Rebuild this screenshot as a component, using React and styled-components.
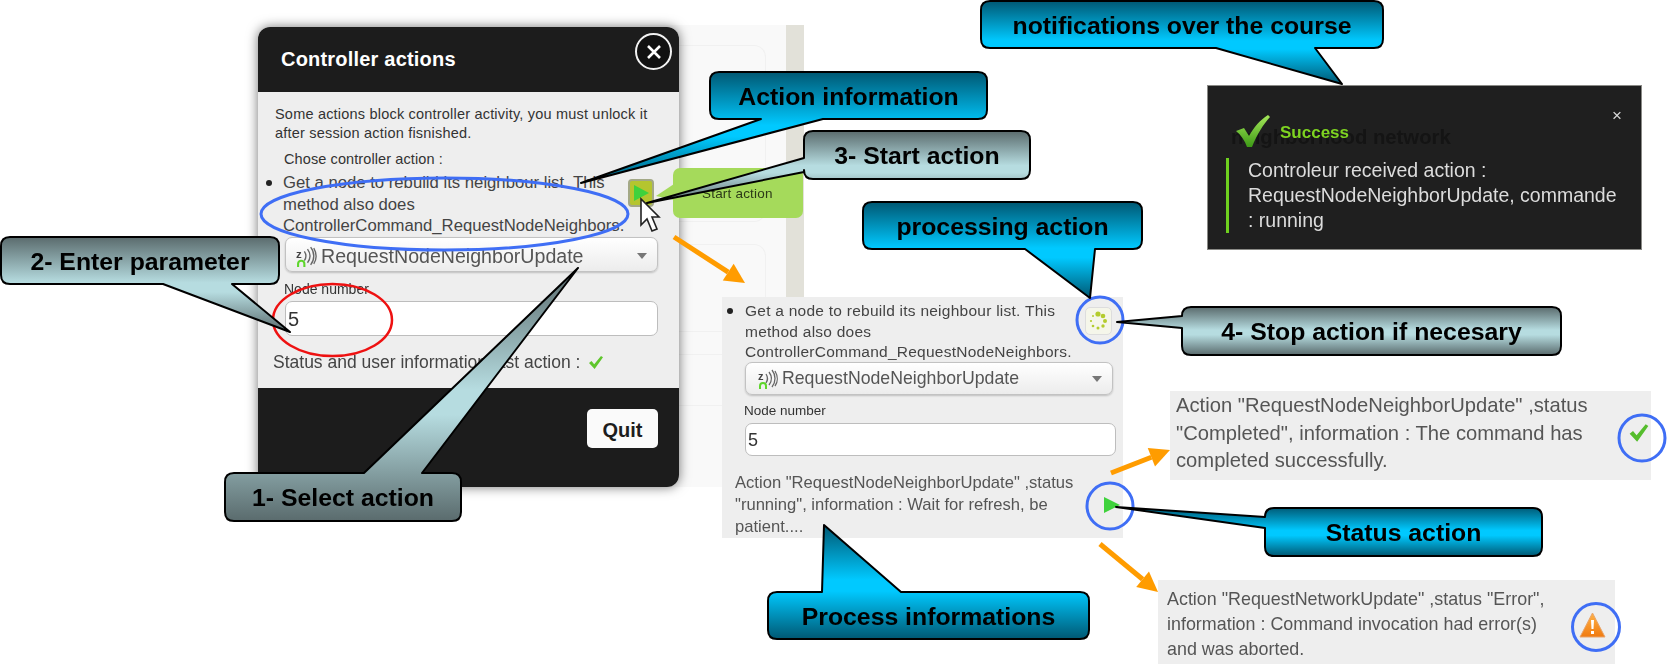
import styled, { createGlobalStyle } from "styled-components";

const GlobalStyle = createGlobalStyle`
  html, body {
    margin: 0;
    padding: 0;
    background: #fff;
  }
  body {
    font-family: "Liberation Sans", Arial, sans-serif;
  }
`;

const Canvas = styled.div`
  position: relative;
  width: 1668px;
  height: 664px;
  overflow: hidden;
  background: #fff;
`;

const Backdrop = styled.div`
  position: absolute;
  left: 640px;
  top: 25px;
  width: 164px;
  height: 462px;
  display: flex;
  background: #f9f9f9;
`;

const BackdropMain = styled.div`
  flex: 1;
  display: flex;
  flex-direction: column;
  gap: 22px;
  padding: 20px 20px 0 0;
`;

const BackdropCard = styled.div`
  height: ${(p) => p.$h}px;
  border: 1px solid #f1f1f1;
  border-left: none;
  border-radius: 0 12px 12px 0;
`;

const BackdropSide = styled.div`
  width: 18px;
  background: #e2e1d9;
`;

const Dialog = styled.div`
  position: absolute;
  left: 258px;
  top: 27px;
  width: 421px;
  height: 460px;
  display: flex;
  flex-direction: column;
  border-radius: 12px;
  overflow: hidden;
  box-shadow: 0 0 12px rgba(0, 0, 0, 0.55);
  filter: blur(0.4px);
`;

const DialogHeader = styled.div`
  height: 65px;
  flex: none;
  box-sizing: border-box;
  display: flex;
  align-items: center;
  justify-content: space-between;
  padding: 0 7px 0 23px;
  background: #1c1c1c;
  color: #fff;
`;

const DialogTitle = styled.h2`
  margin: 0;
  font-size: 20px;
  font-weight: 700;
  letter-spacing: 0.2px;
`;

const CloseButton = styled.div`
  width: 37px;
  height: 37px;
  box-sizing: border-box;
  border-radius: 50%;
  margin-top: -16px;
  border: 2.5px solid #f2f2f2;
  background: #111;
  color: #fff;
  display: flex;
  align-items: center;
  justify-content: center;
`;

const DialogBody = styled.div`
  flex: 1;
  display: flex;
  flex-direction: column;
  background: #eee;
  padding: 13px 21px 0 15px;
  color: #333;
`;

const Intro = styled.p`
  margin: 0 0 0 2px;
  font-size: 14.5px;
  line-height: 19px;
  letter-spacing: 0.2px;
  white-space: nowrap;
`;

const ChooseLabel = styled.div`
  margin: 7px 0 3px 11px;
  font-size: 14.5px;
  line-height: 19px;
  letter-spacing: 0.1px;
`;

const ActionRow = styled.div`
  display: flex;
  align-items: flex-start;
  height: 65px;
  margin-left: -7px;
`;

const Bullet = styled.span`
  flex: none;
  width: 6px;
  height: 6px;
  border-radius: 50%;
  background: #222;
  margin: ${(p) => p.$top}px ${(p) => p.$gap}px 0 0;
`;

const ActionText = styled.div`
  width: ${(p) => p.$w}px;
  font-size: ${(p) => p.$size}px;
  line-height: ${(p) => p.$line}px;
  letter-spacing: ${(p) => p.$spacing || 0}px;
  color: #444;
  white-space: nowrap;
`;

const PlayButton = styled.div`
  flex: none;
  width: 26px;
  height: 28px;
  margin: 7px 0 0 6px;
  box-sizing: border-box;
  border: 2px solid #a3a886;
  border-radius: 4px;
  background: #b5c52f;
  display: flex;
  align-items: center;
  justify-content: center;
`;

const PlayTriangle = styled.span`
  width: 0;
  height: 0;
  border-left: ${(p) => p.$size}px solid #3fd23c;
  border-top: ${(p) => p.$size * 0.55}px solid transparent;
  border-bottom: ${(p) => p.$size * 0.55}px solid transparent;
`;

const SelectBox = styled.div`
  width: ${(p) => p.$w}px;
  height: ${(p) => p.$h}px;
  box-sizing: border-box;
  margin-left: ${(p) => p.$left}px;
  display: flex;
  align-items: center;
  gap: 2px;
  padding: ${(p) => p.$nudge || 0}px 10px 0 ${(p) => p.$pad}px;
  border: 1.5px solid #c2c2c2;
  border-radius: 7px;
  background: linear-gradient(#ffffff, #ececec);
  box-shadow: 0 1px 2px rgba(0, 0, 0, 0.2);
  font-size: ${(p) => p.$size}px;
  color: #555;
`;

const SelectCaret = styled.span`
  margin-left: auto;
  width: 0;
  height: 0;
  border-left: 5px solid transparent;
  border-right: 5px solid transparent;
  border-top: 6px solid #777;
`;

const FieldLabel = styled.div`
  margin: ${(p) => p.$top}px 0 4px ${(p) => p.$left}px;
  font-size: ${(p) => p.$size}px;
  line-height: 16px;
  color: #333;
`;

const TextField = styled.div`
  width: ${(p) => p.$w}px;
  height: ${(p) => p.$h}px;
  box-sizing: border-box;
  margin-left: ${(p) => p.$left}px;
  padding: 2px 0 0 2px;
  display: flex;
  align-items: center;
  border: 1.5px solid #bdbdbd;
  border-radius: 7px;
  background: #fff;
  font-size: ${(p) => p.$size}px;
  color: #333;
`;

const StatusLine = styled.div`
  margin: 16px 0 0 0;
  display: flex;
  align-items: center;
  gap: 8px;
  font-size: 17.5px;
  line-height: 20px;
  color: #444;
  white-space: nowrap;
`;

const DialogFooter = styled.div`
  height: 99px;
  flex: none;
  box-sizing: border-box;
  display: flex;
  justify-content: flex-end;
  padding: 21px 21px 0 0;
  background: #1c1c1c;
`;

const QuitButton = styled.div`
  width: 71px;
  height: 39px;
  box-sizing: border-box;
  padding-top: 3px;
  display: flex;
  align-items: center;
  justify-content: center;
  border-radius: 5px;
  background: #fafafa;
  font-size: 20px;
  font-weight: 700;
  color: #1d1d1d;
`;

const StartTooltip = styled.div`
  position: absolute;
  left: 673px;
  top: 168px;
  width: 130px;
  height: 50px;
  box-sizing: border-box;
  padding-left: 29px;
  display: flex;
  align-items: center;
  border-radius: 7px;
  background: #a5da5b;
  font-size: 13.5px;
  letter-spacing: 0.2px;
  color: #2c3a17;
  filter: blur(0.3px);

  &::before {
    content: "";
    position: absolute;
    left: -17px;
    top: 16px;
    border-right: 18px solid #a5da5b;
    border-top: 12px solid transparent;
    border-bottom: 4px solid transparent;
  }
`;

const Panel = styled.div`
  position: absolute;
  left: ${(p) => p.$x}px;
  top: ${(p) => p.$y}px;
  width: ${(p) => p.$w}px;
  height: ${(p) => p.$h}px;
  box-sizing: border-box;
  padding: ${(p) => p.$pad};
  background: #eee;
  filter: blur(0.35px);
`;

const RunningRow = styled.div`
  display: flex;
  align-items: flex-start;
  height: 61px;
`;

const SpinnerButton = styled.div`
  flex: none;
  width: 25px;
  height: 26px;
  margin: 6px 0 0 0;
  border-radius: 5px;
  border: 1px solid #ddd;
  background: #f5f6ea;
`;

const PanelText = styled.div`
  font-size: ${(p) => p.$size}px;
  line-height: ${(p) => p.$line}px;
  letter-spacing: ${(p) => p.$spacing || 0}px;
  color: #555;
  white-space: nowrap;
  margin-top: ${(p) => p.$top || 0}px;
  margin-left: ${(p) => p.$left || 0}px;
`;

const Toast = styled.div`
  position: absolute;
  left: 1207px;
  top: 85px;
  width: 435px;
  height: 165px;
  box-sizing: border-box;
  border: 1px solid #8a8a86;
  background: #1f1f1f;
  padding: 30px 18px 0 18px;
  filter: blur(0.35px);
`;

const GhostHeading = styled.div`
  position: absolute;
  left: 23px;
  top: 40px;
  font-size: 20.3px;
  font-weight: 700;
  color: #141414;
  white-space: nowrap;
`;

const ToastClose = styled.div`
  position: absolute;
  right: 19px;
  top: 21px;
  font-size: 17px;
  line-height: 18px;
  color: #d8d8d8;
`;

const ToastHead = styled.div`
  position: relative;
  display: flex;
  align-items: center;
  gap: 10px;
  height: 30px;
  margin-left: 10px;
`;

const ToastTitle = styled.div`
  margin-top: 4px;
  font-size: 17px;
  font-weight: 700;
  color: #7ed321;
`;

const ToastMessage = styled.div`
  position: relative;
  margin-top: 12px;
  padding-left: 19px;
  border-left: 3px solid #6fd01f;
  font-size: 19.5px;
  line-height: 25px;
  color: #dcdcdc;
  white-space: nowrap;
`;

const Annotations = styled.svg`
  position: absolute;
  left: 0;
  top: 0;
  width: 1668px;
  height: 664px;
  pointer-events: none;
`;

const IconSpot = styled.svg`
  position: absolute;
  left: ${(p) => p.$x}px;
  top: ${(p) => p.$y}px;
  width: ${(p) => p.$w}px;
  height: ${(p) => p.$h}px;
  overflow: visible;
`;

const CalloutBox = styled.div`
  position: absolute;
  left: ${(p) => p.$x}px;
  top: ${(p) => p.$y}px;
  width: ${(p) => p.$w}px;
  height: ${(p) => p.$h}px;
  display: flex;
  align-items: center;
  justify-content: center;
  font-size: 24.8px;
  font-weight: 700;
  color: #000;
  white-space: nowrap;
`;

const CalloutShape = styled.svg`
  position: absolute;
  left: 0;
  top: 0;
  width: 100%;
  height: 100%;
  overflow: visible;
`;

const CalloutLabel = styled.span`
  position: relative;
  top: 1px;
`;

const tones = {
  blue: ["#005873", "#00c9ff"],
  gray: ["#5a6b6d", "#b6dce0"],
};

function tailPath(w, h, side, a, b, tip) {
  const r = 9;
  const t = `${tip[0]} ${tip[1]}`;
  let d = `M ${r} 0 `;
  if (side === "top") d += `L ${a} 0 L ${t} L ${b} 0 `;
  d += `L ${w - r} 0 Q ${w} 0 ${w} ${r} L ${w} ${h - r} Q ${w} ${h} ${w - r} ${h} `;
  if (side === "bottom") d += `L ${b} ${h} L ${t} L ${a} ${h} `;
  d += `L ${r} ${h} Q 0 ${h} 0 ${h - r} `;
  if (side === "left") d += `L 0 ${b} L ${t} L 0 ${a} `;
  d += `L 0 ${r} Q 0 0 ${r} 0 Z`;
  return d;
}

// tip and base are given in page coordinates, the path wants them local to the box
const Callout = ({ x, y, w, h, side, base, tip, tone = "blue", children }) => {
  const offset = side === "left" ? y : x;
  const id = `callout-${x}-${y}`;
  const [dark, light] = tones[tone];
  return (
    <CalloutBox $x={x} $y={y} $w={w} $h={h}>
      <CalloutShape viewBox={`0 0 ${w} ${h}`}>
        <defs>
          <linearGradient id={id} x1="0" y1="0" x2="0" y2="1">
            <stop offset="0" stopColor={dark} />
            <stop offset="0.48" stopColor={light} />
            <stop offset="0.58" stopColor={light} />
            <stop offset="1" stopColor={dark} />
          </linearGradient>
        </defs>
        <path
          d={tailPath(w, h, side, base[0] - offset, base[1] - offset, [tip[0] - x, tip[1] - y])}
          fill={`url(#${id})`}
          stroke="#000"
          strokeWidth="2"
          strokeLinejoin="round"
        />
      </CalloutShape>
      <CalloutLabel>{children}</CalloutLabel>
    </CalloutBox>
  );
};

const OrangeArrow = ({ from, to }) => {
  const angle = Math.atan2(to[1] - from[1], to[0] - from[0]);
  const back = [to[0] - 20 * Math.cos(angle), to[1] - 20 * Math.sin(angle)];
  const nx = -Math.sin(angle) * 10;
  const ny = Math.cos(angle) * 10;
  return (
    <g>
      <line x1={from[0]} y1={from[1]} x2={back[0]} y2={back[1]} stroke="#ff9c00" strokeWidth="5" />
      <polygon
        points={`${to[0]},${to[1]} ${back[0] + nx},${back[1] + ny} ${back[0] - nx},${back[1] - ny}`}
        fill="#ff9c00"
      />
    </g>
  );
};

const ZWaveIcon = ({ size }) => (
  <svg width={size} height={size} viewBox="0 0 22 22" fill="none" style={{ flex: "none" }}>
    <text x="0" y="12" fontSize="11" fontWeight="700" fontFamily="Liberation Sans" fill="#444">z</text>
    <path d="M8 6c2 3 2 6 0 9M11 4c3 4 3 9 0 13M14 2c4 5 4 12 0 17M17 3c3 5 3 11 0 15" stroke="#666" strokeWidth="1.3" />
    <path d="M2 21v-3a3 3 0 0 1 6 0v3" stroke="#5ed62c" strokeWidth="2" />
  </svg>
);

const SmallCheck = () => (
  <svg width="16" height="15" viewBox="0 0 16 15" style={{ flex: "none" }}>
    <path d="M1 8l2.5-2 2.7 3.2L13 1l2 1.2L6.6 14z" fill="#5fc62c" />
  </svg>
);

const spinnerDots = [
  [12, 6, 2.6], [17, 8, 2.3], [19, 13, 2], [17, 18, 1.7], [12, 20, 1.5],
  [7, 18, 1.3], [5, 13, 1.1], [7, 8, 1],
];

const Spinner = () => (
  <svg width="25" height="26" viewBox="0 0 25 26">
    {spinnerDots.map(([cx, cy, r]) => (
      <circle key={`${cx}-${cy}`} cx={cx} cy={cy} r={r} fill="#b4cc2e" />
    ))}
  </svg>
);

const ActionForm = () => (
  <Panel $x={722} $y={297} $w={401} $h={241} $pad="4px 0 0 5px">
    <RunningRow>
      <Bullet $top={7} $gap={12} />
      <ActionText $w={340} $size={15.5} $line={20.5} $spacing={0.25}>
        Get a node to rebuild its neighbour list. This<br />
        method also does<br />
        ControllerCommand_RequestNodeNeighbors.
      </ActionText>
      <SpinnerButton><Spinner /></SpinnerButton>
    </RunningRow>
    <SelectBox $w={368} $h={33} $left={18} $pad={12} $size={17.7}>
      <ZWaveIcon size={22} />
      RequestNodeNeighborUpdate
      <SelectCaret />
    </SelectBox>
    <FieldLabel $top={8} $left={17} $size={13.5}>Node number</FieldLabel>
    <TextField $w={371} $h={33} $left={18} $size={18}>5</TextField>
    <PanelText $size={16.6} $line={22} $top={16} $left={8}>
      Action "RequestNodeNeighborUpdate" ,status<br />
      "running", information : Wait for refresh, be<br />
      patient....
    </PanelText>
  </Panel>
);

export default function App() {
  return (
    <>
      <GlobalStyle />
      <Canvas>
        <Backdrop>
          <BackdropMain>
            <BackdropCard $h={175} />
            <BackdropCard $h={86} />
            <BackdropCard $h={50} />
          </BackdropMain>
          <BackdropSide />
        </Backdrop>

        <Dialog>
          <DialogHeader>
            <DialogTitle>Controller actions</DialogTitle>
            <CloseButton>
              <svg width="18" height="18" viewBox="0 0 18 18">
                <path d="M3 3l12 12M15 3L3 15" stroke="#fff" strokeWidth="2.6" />
              </svg>
            </CloseButton>
          </DialogHeader>
          <DialogBody>
            <Intro>
              Some actions block controller activity, you must unlock it<br />
              after session action fisnished.
            </Intro>
            <ChooseLabel>Chose controller action :</ChooseLabel>
            <ActionRow>
              <Bullet $top={8} $gap={11} />
              <ActionText $w={339} $size={16.7} $line={21.5}>
                Get a node to rebuild its neighbour list. This<br />
                method also does<br />
                ControllerCommand_RequestNodeNeighbors.
              </ActionText>
              <PlayButton><PlayTriangle $size={15} /></PlayButton>
            </ActionRow>
            <SelectBox $w={373} $h={35} $left={12} $pad={10} $size={19.6} $nudge={3}>
              <ZWaveIcon size={23} />
              RequestNodeNeighborUpdate
              <SelectCaret />
            </SelectBox>
            <FieldLabel $top={9} $left={11} $size={14}>Node number</FieldLabel>
            <TextField $w={373} $h={35} $left={12} $size={20}>5</TextField>
            <StatusLine>
              Status and user information last action :
              <SmallCheck />
            </StatusLine>
          </DialogBody>
          <DialogFooter>
            <QuitButton>Quit</QuitButton>
          </DialogFooter>
        </Dialog>

        <StartTooltip>Start action</StartTooltip>

        <ActionForm />

        <Panel $x={1170} $y={391} $w={481} $h={89} $pad="1px 0 0 6px">
          <PanelText $size={20.2} $line={27.5}>
            Action "RequestNodeNeighborUpdate" ,status<br />
            "Completed", information : The command has<br />
            completed successfully.
          </PanelText>
        </Panel>

        <Panel $x={1158} $y={580} $w={457} $h={84} $pad="7px 0 0 9px">
          <PanelText $size={17.9} $line={25}>
            Action "RequestNetworkUpdate" ,status "Error",<br />
            information : Command invocation had error(s)<br />
            and was aborted.
          </PanelText>
        </Panel>

        <Toast>
          <GhostHeading>neighborhood network</GhostHeading>
          <ToastClose>×</ToastClose>
          <ToastHead>
            <svg width="34" height="32" viewBox="0 0 34 32">
              <defs>
                <linearGradient id="toast-check" x1="0" y1="0" x2="0" y2="1">
                  <stop offset="0" stopColor="#a6e85a" />
                  <stop offset="1" stopColor="#3d9a16" />
                </linearGradient>
              </defs>
              <path d="M0 16l8-3 5 8C18 12 24 5 32 0l2 2c-7 8-13 17-18 30h-5C9 26 5 20 0 16z" fill="url(#toast-check)" />
            </svg>
            <ToastTitle>Success</ToastTitle>
          </ToastHead>
          <ToastMessage>
            Controleur received action :<br />
            RequestNodeNeighborUpdate, commande<br />
            : running
          </ToastMessage>
        </Toast>

        <IconSpot $x={640} $y={198} $w={19} $h={35} viewBox="0 0 19 35">
          <path d="M1 1v26l6-6 5 12 5-2-5-12h7z" fill="#fff" stroke="#222" strokeWidth="1.6" />
        </IconSpot>
        <IconSpot $x={1104} $y={497} $w={16} $h={16} viewBox="0 0 16 16">
          <path d="M0 0l16 8-16 8z" fill="#3fd23c" />
        </IconSpot>
        <IconSpot $x={1628} $y={423} $w={22} $h={20} viewBox="0 0 16 15">
          <path d="M1 8l2.5-2 2.7 3.2L13 1l2 1.2L6.6 14z" fill="#55bd2c" />
        </IconSpot>
        <IconSpot $x={1579} $y={612} $w={27} $h={26} viewBox="0 0 27 26">
          <defs>
            <linearGradient id="warn-fill" x1="0" y1="0" x2="0" y2="1">
              <stop offset="0" stopColor="#ffb347" />
              <stop offset="1" stopColor="#f07a10" />
            </linearGradient>
          </defs>
          <path d="M13.5 1L26 25H1z" fill="url(#warn-fill)" stroke="#e8a46a" strokeLinejoin="round" />
          <path d="M12 8h3l-.5 9h-2zM12 19h3v3h-3z" fill="#fff" />
        </IconSpot>

        <Annotations viewBox="0 0 1668 664" fill="none">
          <ellipse cx="444.5" cy="214" rx="183.5" ry="36" stroke="#3f6ef5" strokeWidth="3" />
          <ellipse cx="332.5" cy="320" rx="59.5" ry="36" stroke="#ee1111" strokeWidth="2.5" />
          <circle cx="1100" cy="320" r="23" stroke="#3f6ef5" strokeWidth="3" />
          <circle cx="1110" cy="506" r="23" stroke="#3f6ef5" strokeWidth="3" />
          <circle cx="1642" cy="438" r="23" stroke="#3f6ef5" strokeWidth="3" />
          <circle cx="1596" cy="627" r="23.5" stroke="#3f6ef5" strokeWidth="3" />
          <OrangeArrow from={[674, 237]} to={[745, 283]} />
          <OrangeArrow from={[1111, 473]} to={[1170, 450]} />
          <OrangeArrow from={[1100, 544]} to={[1158, 592]} />
        </Annotations>

        <Callout x={981} y={1} w={402} h={47} side="bottom" base={[1216, 1315]} tip={[1342, 84]}>
          notifications over the course
        </Callout>
        <Callout x={710} y={72} w={277} h={47} side="bottom" base={[761, 823]} tip={[581, 183]}>
          Action information
        </Callout>
        <Callout x={804} y={131} w={226} h={48} side="left" base={[158, 172]} tip={[647, 203]} tone="gray">
          3- Start action
        </Callout>
        <Callout x={1} y={237} w={278} h={47} side="bottom" base={[163, 232]} tip={[290, 332]} tone="gray">
          2- Enter parameter
        </Callout>
        <Callout x={225} y={473} w={236} h={48} side="top" base={[364, 422]} tip={[578, 268]} tone="gray">
          1- Select action
        </Callout>
        <Callout x={863} y={202} w={279} h={47} side="bottom" base={[1025, 1095]} tip={[1090, 298]}>
          processing action
        </Callout>
        <Callout x={1182} y={307} w={379} h={48} side="left" base={[316, 328]} tip={[1117, 322]} tone="gray">
          4- Stop action if necesary
        </Callout>
        <Callout x={768} y={592} w={321} h={47} side="top" base={[822, 901]} tip={[824, 525]}>
          Process informations
        </Callout>
        <Callout x={1265} y={508} w={277} h={48} side="left" base={[517, 528]} tip={[1116, 507]}>
          Status action
        </Callout>
      </Canvas>
    </>
  );
}
